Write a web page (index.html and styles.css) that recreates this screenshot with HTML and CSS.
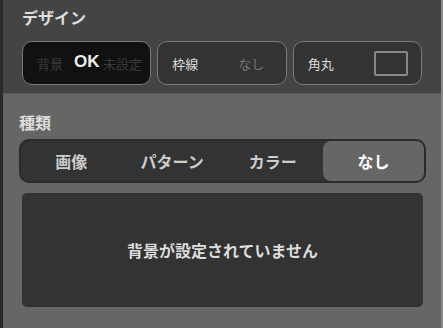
FILE: index.html
```html
<!DOCTYPE html>
<html lang="ja">
<head>
    <meta charset="UTF-8">
    <meta name="viewport" content="width=device-width, initial-scale=1.0">
    <title>デザイン</title>
    <link rel="stylesheet" href="styles.css">
</head>
<body>
    <section class="design">
        <h2 class="section-title">デザイン</h2>
        <div class="cards">
            <div class="card card-active">
                <span class="card-label">背景</span>
                <span class="card-value">未設定</span>
                <span class="toast">OK</span>
            </div>
            <div class="card">
                <span class="card-label">枠線</span>
                <span class="card-value">なし</span>
            </div>
            <div class="card">
                <span class="card-label">角丸</span>
                <span class="radius-box"></span>
            </div>
        </div>
    </section>

    <section class="kind">
        <h2 class="section-title">種類</h2>
        <div class="segments">
            <button class="segment">画像</button>
            <button class="segment">パターン</button>
            <button class="segment">カラー</button>
            <button class="segment selected">なし</button>
        </div>
        <div class="empty">背景が設定されていません</div>
    </section>
</body>
</html>
```

FILE: styles.css
```css
html, body {
    height: 100%;
}
body {
    margin: 0;
    font-family: "Noto Sans CJK JP", "Noto Sans", sans-serif;
    background-color: #666;
    border-left: 3px solid #2a2a2a;
    border-right: 2px solid #8a8a8a;
    box-sizing: border-box;
    color: #ddd;
}
.section-title {
    margin: 0;
    font-size: 16px;
    line-height: 20px;
    font-weight: bold;
    color: #ddd;
}
.design {
    background-color: #444;
    padding: 7px 19px 8px 19px;
    border-bottom: 1px solid #555;
}
.cards {
    display: grid;
    grid-template-columns: repeat(3, minmax(0, 1fr));
    gap: 6px;
    margin-top: 14px;
}
.card {
    position: relative;
    display: flex;
    align-items: center;
    height: 44px;
    box-sizing: border-box;
    padding: 0 13px 0 14px;
    background-color: #333;
    border: 1px solid #7a7a7a;
    border-radius: 10px;
    font-size: 13px;
    white-space: nowrap;
}
.card-active {
    background-color: #111;
}
.card-label {
    width: 66px;
    flex-shrink: 0;
}
.card-value {
    color: #777;
}
.card-active .card-label,
.card-active .card-value {
    color: #3a3a3a;
}
.toast {
    position: absolute;
    left: 51px;
    top: 10px;
    font-family: "Liberation Sans", sans-serif;
    font-size: 17px;
    font-weight: bold;
    color: #eee;
}
.radius-box {
    margin-left: auto;
    width: 40px;
    height: 25px;
    box-sizing: border-box;
    border: 2px solid #888;
    border-radius: 2px;
}
.kind {
    padding: 18px 15px 0 16px;
}
.segments {
    display: grid;
    grid-template-columns: repeat(4, 1fr);
    margin-top: 7px;
    height: 44px;
    box-sizing: border-box;
    background-color: #333;
    border: 2px solid #2b2b2b;
    border-radius: 10px;
}
.segment {
    border: none;
    background: none;
    font-family: inherit;
    font-size: 16px;
    font-weight: bold;
    color: #ccc;
    border-radius: 8px;
    padding: 0;
}
.segment.selected {
    background-color: #666;
    color: #fff;
}
.empty {
    display: flex;
    align-items: center;
    justify-content: center;
    margin: 10px 3px 0;
    height: 114px;
    background-color: #333;
    border-radius: 5px;
    font-size: 16px;
    font-weight: bold;
    color: #ddd;
}
```
